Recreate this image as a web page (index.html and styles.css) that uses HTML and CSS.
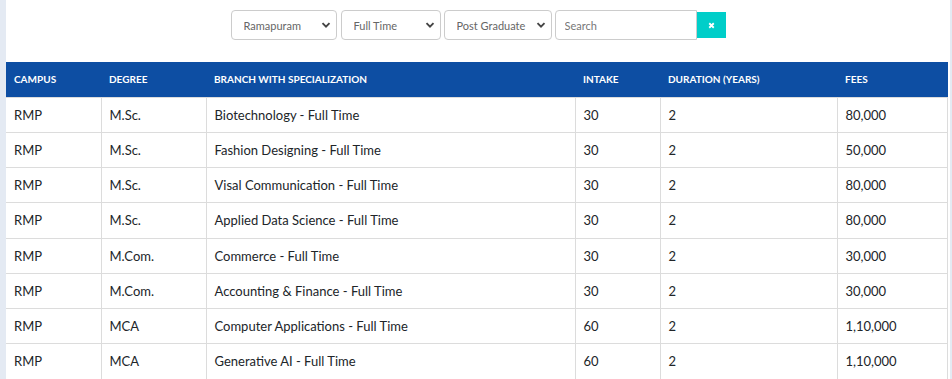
FILE: index.html
```html
<!DOCTYPE html>
<html lang="en">
<head>
  <meta charset="UTF-8" />
  <meta name="viewport" content="width=device-width, initial-scale=1.0" />
  <title>Programmes Offered</title>
  <link rel="stylesheet" href="styles.css">
</head>
<body>
  <div class="page">
    <div class="filters">
      <div class="select-box campus-select">
        <select>
          <option>Ramapuram</option>
        </select>
        <svg class="chevron" viewBox="0 0 10 10"><path d="M1.5 3.2 L5 6.7 L8.5 3.2" /></svg>
      </div>
      <div class="select-box mode-select">
        <select>
          <option>Full Time</option>
        </select>
        <svg class="chevron" viewBox="0 0 10 10"><path d="M1.5 3.2 L5 6.7 L8.5 3.2" /></svg>
      </div>
      <div class="select-box level-select">
        <select>
          <option>Post Graduate</option>
        </select>
        <svg class="chevron" viewBox="0 0 10 10"><path d="M1.5 3.2 L5 6.7 L8.5 3.2" /></svg>
      </div>
      <div class="search-group">
        <input type="text" placeholder="Search" />
        <button class="clear-btn">
          <svg viewBox="0 0 10 10"><path d="M2.5 2.5 L7.5 7.5 M7.5 2.5 L2.5 7.5" /></svg>
        </button>
      </div>
    </div>

    <table class="programmes">
      <thead>
        <tr>
          <th class="col-campus">Campus</th>
          <th class="col-degree">Degree</th>
          <th class="col-branch">Branch with Specialization</th>
          <th class="col-intake">Intake</th>
          <th class="col-duration">Duration (Years)</th>
          <th class="col-fees">Fees</th>
        </tr>
      </thead>
      <tbody id="rows"></tbody>
    </table>
  </div>

  <script>
    const programmes = [
      ['RMP', 'M.Sc.', 'Biotechnology - Full Time', '30', '2', '80,000'],
      ['RMP', 'M.Sc.', 'Fashion Designing - Full Time', '30', '2', '50,000'],
      ['RMP', 'M.Sc.', 'Visal Communication - Full Time', '30', '2', '80,000'],
      ['RMP', 'M.Sc.', 'Applied Data Science - Full Time', '30', '2', '80,000'],
      ['RMP', 'M.Com.', 'Commerce - Full Time', '30', '2', '30,000'],
      ['RMP', 'M.Com.', 'Accounting & Finance - Full Time', '30', '2', '30,000'],
      ['RMP', 'MCA', 'Computer Applications - Full Time', '60', '2', '1,10,000'],
      ['RMP', 'MCA', 'Generative AI - Full Time', '60', '2', '1,10,000']
    ];

    const tbody = document.getElementById('rows');
    programmes.forEach(row => {
      const tr = document.createElement('tr');
      row.forEach(value => {
        const td = document.createElement('td');
        td.textContent = value;
        tr.appendChild(td);
      });
      tbody.appendChild(tr);
    });
  </script>
</body>
</html>
```

FILE: styles.css
```css
* {
  box-sizing: border-box;
}
body {
  margin: 0;
  padding: 0 2px 0 6px;
  background-color: #e4eaf3;
  font-family: 'Lato', 'Noto Sans', sans-serif;
  color: #212529;
}
.page {
  background: #fff;
  min-height: 379px;
  padding-top: 10px;
}
.filters {
  display: flex;
  justify-content: center;
  align-items: center;
  gap: 3px;
  margin-bottom: 22px;
}
.select-box {
  position: relative;
  height: 30px;
}
.campus-select {
  width: 106px;
  margin-right: 1px;
}
.mode-select {
  width: 100px;
}
.level-select {
  width: 108px;
}
.select-box select {
  appearance: none;
  width: 100%;
  height: 100%;
  border: 1px solid #ccc;
  border-radius: 4px;
  background: #fff;
  padding: 0 18px 0 12px;
  font-family: 'Lato', sans-serif;
  font-size: 11px;
  color: #666;
}
.chevron {
  position: absolute;
  right: 6px;
  top: 10px;
  width: 10px;
  height: 10px;
  pointer-events: none;
}
.chevron path {
  fill: none;
  stroke: #444;
  stroke-width: 1.9;
}
.search-group {
  display: flex;
  align-items: center;
}
.search-group input {
  width: 142px;
  height: 30px;
  border: 1px solid #ccc;
  border-radius: 4px 0 0 4px;
  padding: 0 9px;
  font-family: 'Lato', sans-serif;
  font-size: 11px;
  color: #555;
}
.search-group input::placeholder {
  color: #777;
}
.clear-btn {
  width: 29px;
  height: 26px;
  border: none;
  background-color: #00cec9;
  padding: 0;
  display: flex;
  justify-content: center;
  align-items: center;
}
.clear-btn svg {
  width: 9px;
  height: 9px;
}
.clear-btn path {
  stroke: #fff;
  stroke-width: 2;
}
.programmes {
  width: calc(100% - 2px);
  border-collapse: collapse;
  table-layout: fixed;
  font-size: 13px;
}
.programmes th {
  background-color: #0d4ea3;
  color: #fff;
  text-transform: uppercase;
  font-size: 10px;
  font-weight: 700;
  text-align: left;
  height: 35px;
  padding: 0 8px;
}
.programmes td {
  height: 35.25px;
  padding: 0 8px;
  border: 1px solid #dcdcdc;
  vertical-align: middle;
}
.programmes td:first-child {
  border-left: none;
}
.col-campus { width: 95px; }
.col-degree { width: 105px; }
.col-branch { width: 369px; }
.col-intake { width: 85px; }
.col-duration { width: 177px; }
```
